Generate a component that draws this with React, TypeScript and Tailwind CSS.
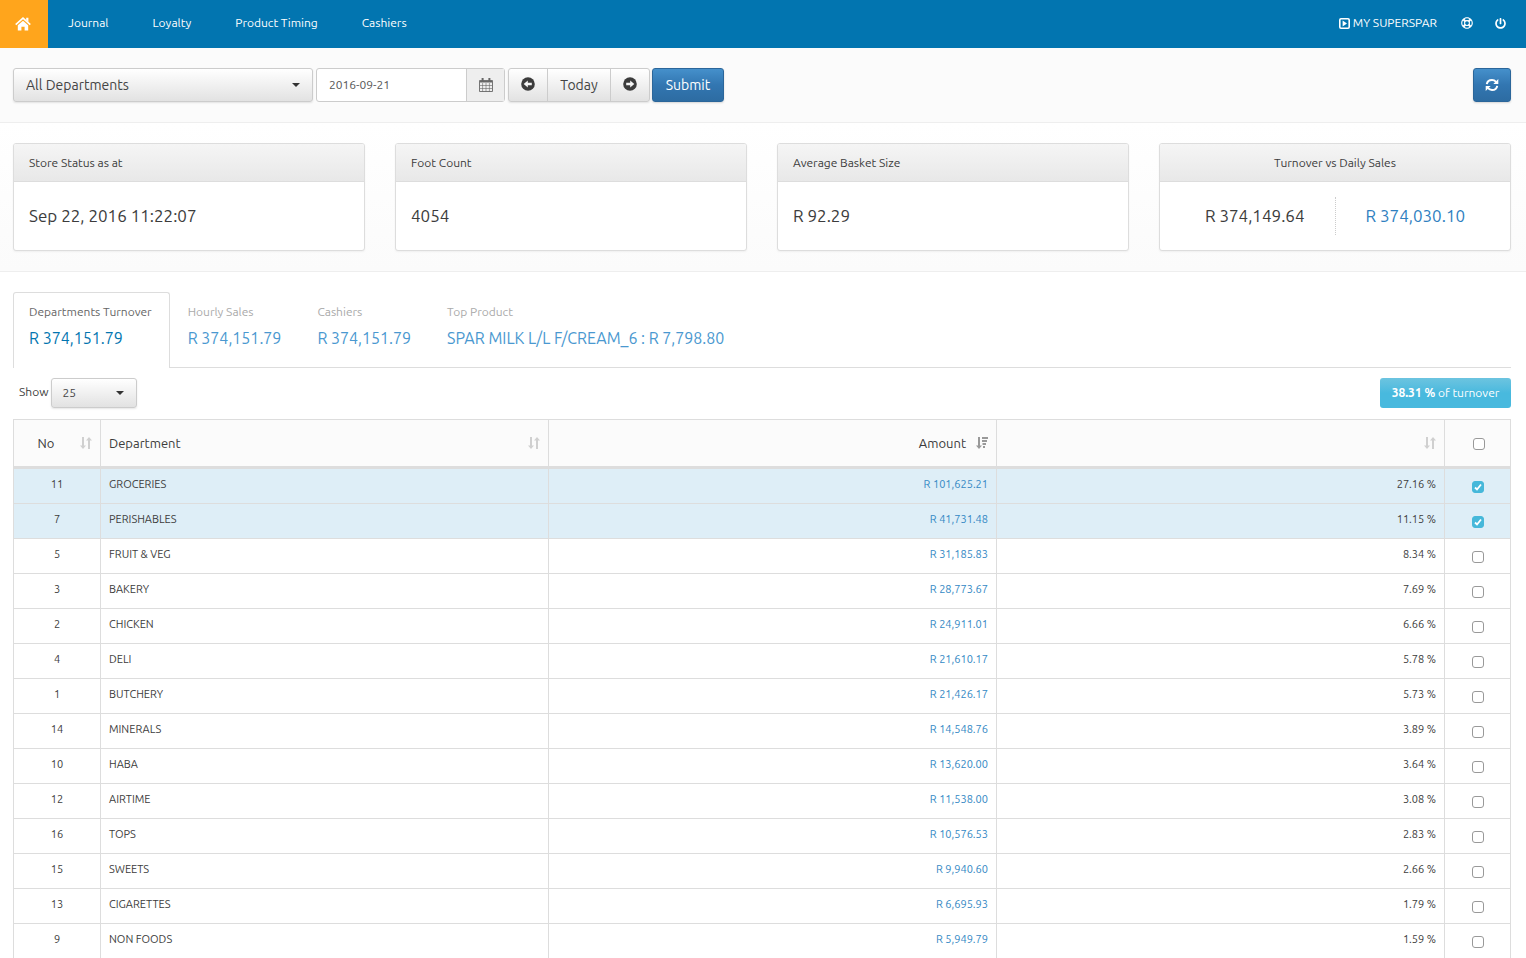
import { useState } from 'react';
import type { ReactNode } from 'react';
import { FaPowerOff, FaRegLifeRing } from 'react-icons/fa';

const navLinks = ['Journal', 'Loyalty', 'Product Timing', 'Cashiers'];

const tabs = [
  { label: 'Departments Turnover', value: 'R 374,151.79' },
  { label: 'Hourly Sales', value: 'R 374,151.79' },
  { label: 'Cashiers', value: 'R 374,151.79' },
  { label: 'Top Product', value: 'SPAR MILK L/L F/CREAM_6 : R 7,798.80' },
];

const departments = [
  { no: 11, name: 'GROCERIES', amount: 'R 101,625.21', share: '27.16 %' },
  { no: 7, name: 'PERISHABLES', amount: 'R 41,731.48', share: '11.15 %' },
  { no: 5, name: 'FRUIT & VEG', amount: 'R 31,185.83', share: '8.34 %' },
  { no: 3, name: 'BAKERY', amount: 'R 28,773.67', share: '7.69 %' },
  { no: 2, name: 'CHICKEN', amount: 'R 24,911.01', share: '6.66 %' },
  { no: 4, name: 'DELI', amount: 'R 21,610.17', share: '5.78 %' },
  { no: 1, name: 'BUTCHERY', amount: 'R 21,426.17', share: '5.73 %' },
  { no: 14, name: 'MINERALS', amount: 'R 14,548.76', share: '3.89 %' },
  { no: 10, name: 'HABA', amount: 'R 13,620.00', share: '3.64 %' },
  { no: 12, name: 'AIRTIME', amount: 'R 11,538.00', share: '3.08 %' },
  { no: 16, name: 'TOPS', amount: 'R 10,576.53', share: '2.83 %' },
  { no: 15, name: 'SWEETS', amount: 'R 9,940.60', share: '2.66 %' },
  { no: 13, name: 'CIGARETTES', amount: 'R 6,695.93', share: '1.79 %' },
  { no: 9, name: 'NON FOODS', amount: 'R 5,949.79', share: '1.59 %' },
];

const lightButton =
  'border-[#ccc] bg-linear-to-b from-white to-[#e2e2e2] text-[#444] shadow-[0_1px_2px_rgba(0,0,0,0.1)]';
const primaryButton =
  'rounded-[3px] border border-[#2b669a] bg-linear-to-b from-[#4590cb] via-[#3276b1] to-[#2d6ca2] text-white shadow-[0_1px_2px_rgba(0,0,0,0.15)]';

function HomeIcon() {
  return (
    <svg viewBox="0 0 16 14" className="h-[14px] w-4 fill-white" aria-hidden="true">
      <path d="M.7 7.600 8 1.200l7.300 6.400" fill="none" stroke="#fff" strokeWidth="1.700" />
      <path d="M2.800 8.200 8 3.700l5.200 4.500v5.400H9.600V9.800H6.400v3.800H2.800zM11.200.800h2.200v4.200l-2.200-1.900z" />
    </svg>
  );
}

function StoreIcon() {
  return (
    <svg viewBox="0 0 11 11" className="h-[11px] w-[11px] fill-white" aria-hidden="true">
      <rect x=".8" y=".8" width="9.400" height="9.400" rx="1.200" fill="none" stroke="#fff" strokeWidth="1.600" />
      <path d="M3.600 2.600 8 5.500 3.600 8.400z" />
    </svg>
  );
}

function Caret() {
  return (
    <svg viewBox="0 0 8 4" className="pointer-events-none absolute right-[13px] top-1/2 -mt-[2px] h-1 w-2 fill-[#333]" aria-hidden="true">
      <path d="M0 0h8L4 4z" />
    </svg>
  );
}

function CalendarIcon() {
  return (
    <svg viewBox="0 0 14 14" className="h-[14px] w-[14px]" fill="none" stroke="#666" aria-hidden="true">
      <path d="M.5 2.500h13v11H.5z" strokeWidth=".9" />
      <path d="M1 3.700h12" strokeWidth="1.600" />
      <path d="M1 7.500h12M1 10.500h12M3.600 5v8.500M7 5v8.500M10.400 5v8.500" strokeWidth=".6" />
      <path d="M3.600 0v3.600M10.400 0v3.600" strokeWidth="2" />
    </svg>
  );
}

function CircleArrow({ flip = false }: { flip?: boolean }) {
  return (
    <svg viewBox="0 0 14 14" className={flip ? 'h-[14px] w-[14px] rotate-180' : 'h-[14px] w-[14px]'} aria-hidden="true">
      <circle cx="7" cy="7" r="6.8" fill="#3c3c3c" />
      <path d="M2.700 7 6.800 3.400v2.300h4v2.600h-4v2.300z" fill="#f6f6f6" />
    </svg>
  );
}

function RefreshIcon() {
  return (
    <svg viewBox="0 0 14 14" className="h-[14px] w-[14px]" fill="none" stroke="#fff" strokeWidth="2" aria-hidden="true">
      <path d="M1.800 6.200C2.200 3.700 4.300 2 7 2c1.700 0 3 .7 4 1.800" />
      <path d="M12.200 7.800C11.800 10.300 9.700 12 7 12c-1.700 0-3-.7-4-1.800" />
      <path d="M13.300 1v5h-5zM.7 13V8h5z" fill="#fff" stroke="none" />
    </svg>
  );
}

function SortIcon({ active = false }: { active?: boolean }) {
  return (
    <svg
      viewBox="0 0 12 12"
      className={
        active
          ? 'absolute right-2 top-[17px] h-3 w-3 fill-[#999]'
          : 'absolute right-2 top-[17px] h-3 w-3 fill-[#d0d0d0]'
      }
      aria-hidden="true"
    >
      <path d="M2 0h2v8.500h2L3 12 0 8.500h2z" />
      {active ? <path d="M6 0h6v2H6zM6 3h5v2H6zM6.500 6H10v2H6.500zM7 9h2v2H7z" /> : <path d="M8 12h2V3.500h2L9 0 6 3.500h2z" />}
    </svg>
  );
}

function Checkbox({ label, checked, onChange }: { label: string; checked: boolean; onChange: () => void }) {
  return (
    <span className="relative mx-auto block h-3 w-3">
      <input
        type="checkbox"
        aria-label={label}
        checked={checked}
        onChange={onChange}
        className="block h-3 w-3 appearance-none rounded-[3px] border border-[#999] bg-white checked:border-[#46b8da] checked:bg-[#46b8da]"
      />
      {checked && (
        <svg viewBox="0 0 12 12" className="pointer-events-none absolute inset-0 h-3 w-3" fill="none" stroke="#fff" strokeWidth="1.800" aria-hidden="true">
          <path d="M3 6.500 5 8.500 9 3.500" />
        </svg>
      )}
    </span>
  );
}

function Card({ title, centered = false, children }: { title: string; centered?: boolean; children: ReactNode }) {
  return (
    <section className="overflow-hidden rounded-[3px] border border-[#ddd] bg-white shadow-[0_1px_2px_rgba(0,0,0,0.05)]">
      <h2
        className={
          centered
            ? 'border-b border-[#ddd] bg-linear-to-b from-[#f5f5f5] to-[#e8e8e8] px-[15px] py-[10px] text-center leading-[17px]'
            : 'border-b border-[#ddd] bg-linear-to-b from-[#f5f5f5] to-[#e8e8e8] px-[15px] py-[10px] leading-[17px]'
        }
      >
        {title}
      </h2>
      <div className="px-[15px] py-[15px] text-[17px] leading-[38px]">{children}</div>
    </section>
  );
}

export default function App() {
  const [selected, setSelected] = useState<number[]>([11, 7]);
  const toggle = (no: number) =>
    setSelected((current) => (current.includes(no) ? current.filter((n) => n !== no) : [...current, no]));
  const allSelected = selected.length === departments.length;

  return (
    <div className="min-h-screen bg-white font-['Ubuntu','Noto_Sans',sans-serif] text-xs text-[#3c3c3c]">
      <header className="flex h-12 items-center bg-[#0275b0] text-white">
        <a href="#home" aria-label="Home" className="flex h-12 w-12 items-center justify-center bg-[#ffa51c] pr-[2px]">
          <HomeIcon />
        </a>
        <nav className="flex gap-11 pb-[2px] pl-5">
          {navLinks.map((link) => (
            <a key={link} href="#nav">
              {link}
            </a>
          ))}
        </nav>
        <div className="ml-auto flex items-center gap-[22px] pb-[2px] pr-5">
          <a href="#store" className="flex items-center gap-[3px] pr-[2px]">
            <StoreIcon />
            MY SUPERSPAR
          </a>
          <a href="#help" aria-label="Help">
            <FaRegLifeRing className="h-3 w-3" />
          </a>
          <a href="#logout" aria-label="Log out">
            <FaPowerOff className="h-[11px] w-[11px]" />
          </a>
        </div>
      </header>

      <form
        className="flex items-center border-b border-[#eee] bg-[#fbfbfb] py-5 pl-[13px] pr-[15px] text-sm"
        onSubmit={(event) => event.preventDefault()}
      >
        <div className="relative mr-[3px] w-[300px]">
          <select aria-label="Department" className={`h-[34px] w-full appearance-none rounded-[3px] border px-3 ${lightButton}`}>
            <option>All Departments</option>
          </select>
          <Caret />
        </div>
        <div className="mr-[3px] flex h-[34px] w-[189px] rounded-[3px] border border-[#ccc] bg-white">
          <input aria-label="Date" defaultValue="2016-09-21" className="min-w-0 flex-1 px-3 text-xs text-[#555] outline-none" />
          <button type="button" aria-label="Pick a date" className="flex w-[38px] items-center justify-center border-l border-[#ccc] bg-[#eee]">
            <CalendarIcon />
          </button>
        </div>
        <div className={`mr-[2px] flex h-[34px] rounded-[3px] border ${lightButton}`}>
          <button type="button" aria-label="Previous day" className="px-3 pb-[2px]">
            <CircleArrow />
          </button>
          <button type="button" className="w-16 border-x border-[#ccc]">
            Today
          </button>
          <button type="button" aria-label="Next day" className="px-3 pb-[2px]">
            <CircleArrow flip />
          </button>
        </div>
        <button type="submit" className={`h-[34px] w-[72px] ${primaryButton}`}>
          Submit
        </button>
        <button type="button" aria-label="Refresh" className={`ml-auto flex h-[34px] w-[38px] items-center justify-center ${primaryButton}`}>
          <RefreshIcon />
        </button>
      </form>

      <div className="grid grid-cols-4 gap-[30px] border-b border-[#eee] bg-linear-to-b from-white to-[#fbfbfb] pb-5 pl-[13px] pr-[15px] pt-5">
        <Card title="Store Status as at">Sep 22, 2016 11:22:07</Card>
        <Card title="Foot Count">4054</Card>
        <Card title="Average Basket Size">R 92.29</Card>
        <Card title="Turnover vs Daily Sales" centered>
          <div className="flex justify-center whitespace-nowrap text-center">
            <span className="border-r border-dotted border-[#ccc] px-[30px]">R 374,149.64</span>
            <a href="#daily" className="px-[30px] text-[#2f7fbf]">
              R 374,030.10
            </a>
          </div>
        </Card>
      </div>

      <main className="pl-[13px] pr-[15px] pt-5">
        <div role="tablist" className="flex gap-[2px] border-b border-[#ddd]">
          {tabs.map((tab, index) => (
            <button
              key={tab.label}
              type="button"
              role="tab"
              aria-selected={index === 0}
              className={
                index === 0
                  ? '-mb-px h-[76px] rounded-t-[3px] border border-b-0 border-[#ddd] bg-white pb-[10px] pl-[15px] pr-[17px] text-left text-[#666]'
                  : '-mb-px h-[76px] border border-b-0 border-transparent pb-[10px] pl-[15px] pr-[17px] text-left text-[#aaa]'
              }
            >
              <span className="block leading-5">{tab.label}</span>
              <span className={index === 0 ? 'block pt-1 text-base text-[#0275b0]' : 'block pt-1 text-base text-[#4a98d0]'}>{tab.value}</span>
            </button>
          ))}
        </div>

        <div className="flex items-center justify-between pb-[11px] pl-[6px] pt-[10px]">
          <div className="flex items-center gap-[3px]">
            <label htmlFor="page-size" className="pb-[2px]">
              Show
            </label>
            <div className="relative w-[86px]">
              <select id="page-size" defaultValue="25" className={`block h-[30px] w-full appearance-none rounded-[3px] border px-[10px] ${lightButton}`}>
                <option>10</option>
                <option>25</option>
                <option>50</option>
              </select>
              <Caret />
            </div>
          </div>
          <button
            type="button"
            className="h-[30px] w-[131px] rounded-[3px] bg-linear-to-b from-[#6cc4e0] via-[#48b9de] to-[#48b9de] text-center text-white"
          >
            <strong className="font-bold">38.31 %</strong> of turnover
          </button>
        </div>

        <table className="w-full table-fixed border-separate border-spacing-0 border-l border-t border-[#ddd] text-[11px] leading-[15px]">
          <colgroup>
            <col className="w-[87px]" />
            <col />
            <col />
            <col />
            <col className="w-[66px]" />
          </colgroup>
          <thead className="bg-[#fbfbfb] text-[13px]">
            <tr className="h-[49px] *:relative *:border-b-[3px] *:border-r *:border-[#ddd] *:font-normal">
              <th className="pl-2 pr-[30px] text-center">
                No
                <SortIcon />
              </th>
              <th className="pl-2 pr-[30px] text-left">
                Department
                <SortIcon />
              </th>
              <th className="pl-2 pr-[30px] text-right" aria-sort="descending">
                Amount
                <SortIcon active />
              </th>
              <th aria-label="Share of turnover">
                <SortIcon />
              </th>
              <th className="pl-[3px] pt-[2px]">
                <Checkbox
                  label="Select all departments"
                  checked={allSelected}
                  onChange={() => setSelected(allSelected ? [] : departments.map((d) => d.no))}
                />
              </th>
            </tr>
          </thead>
          <tbody>
            {departments.map((row) => {
              const isSelected = selected.includes(row.no);
              return (
                <tr
                  key={row.no}
                  className={
                    isSelected
                      ? 'h-[35px] bg-[#deeef7] *:border-b *:border-r *:border-[#ddd] *:px-2 *:pt-2 *:align-top last:h-[34px] last:*:border-b-0'
                      : 'h-[35px] *:border-b *:border-r *:border-[#ddd] *:px-2 *:pt-2 *:align-top last:h-[34px] last:*:border-b-0'
                  }
                >
                  <td className="text-center">{row.no}</td>
                  <td>{row.name}</td>
                  <td className="text-right">
                    <a href="#department" className="text-[#3388c4]">
                      {row.amount}
                    </a>
                  </td>
                  <td className="text-right">{row.share}</td>
                  <td>
                    <div className="pt-1">
                      <Checkbox label={`Select ${row.name}`} checked={isSelected} onChange={() => toggle(row.no)} />
                    </div>
                  </td>
                </tr>
              );
            })}
          </tbody>
        </table>
      </main>
    </div>
  );
}
